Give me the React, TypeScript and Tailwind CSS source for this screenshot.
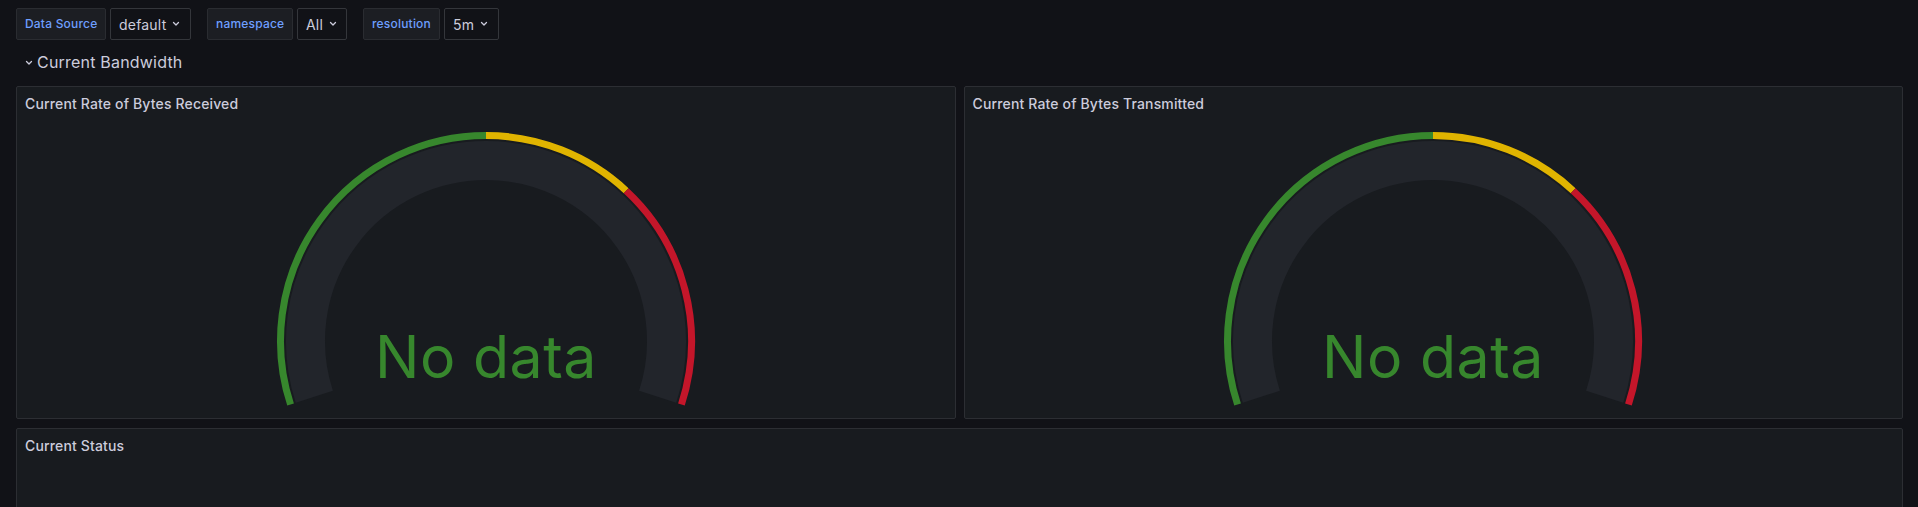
import React from "react";

function Chevron({ className = "" }: { className?: string }) {
  return (
    <svg className={className} width="8" height="6" viewBox="0 0 8 6" fill="none">
      <path d="M1.5 1.5 L4 4 L6.5 1.5" stroke="currentColor" strokeWidth="1.3" strokeLinecap="round" strokeLinejoin="round" />
    </svg>
  );
}

function VarGroup({ label, value, labelWidth, valueWidth }: { label: string; value: string; labelWidth: string; valueWidth: string }) {
  return (
    <div className="flex items-center gap-1">
      <div className={`h-8 flex items-center pl-2 bg-[#1c1e23] border border-[#2a2c31] rounded-[2px] text-[12px] font-medium tracking-[0.2px] text-[#6e9fff] ${labelWidth}`}>
        {label}
      </div>
      <div className={`h-8 flex items-center pl-2 bg-[#111217] border border-[#34363b] rounded-[2px] text-[14px] tracking-[0.2px] text-[#ccccdc] ${valueWidth}`}>
        <span>{value}</span>
        <Chevron className="ml-[6px] text-[#ccccdc]" />
      </div>
    </div>
  );
}

function Gauge() {
  return (
    <svg width="440" height="290" viewBox="0 0 440 290" className="block mx-auto mt-[3px]">
      <path d="M 48.33 274.78 A 180.5 180.5 0 1 1 391.67 274.78" stroke="#22252b" strokeWidth="39" fill="none" />
      <path d="M 24.56 282.5 A 205.5 205.5 0 0 1 220 13.5" stroke="#37872D" strokeWidth="7" fill="none" />
      <path d="M 220 13.5 A 205.5 205.5 0 0 1 360.15 68.71" stroke="#E0B400" strokeWidth="7" fill="none" />
      <path d="M 360.15 68.71 A 205.5 205.5 0 0 1 415.44 282.5" stroke="#C4162A" strokeWidth="7" fill="none" />
      <text x="220" y="256" textAnchor="middle" fontSize="59" letterSpacing="0.5" fill="#37872D" fontFamily="Inter, 'Noto Sans', sans-serif">
        No data
      </text>
    </svg>
  );
}

function Panel({ title, children, className = "" }: { title: string; children?: React.ReactNode; className?: string }) {
  return (
    <div className={`bg-[#181b1f] border border-[#2c2e33] rounded-[2px] flex flex-col overflow-hidden ${className}`}>
      <div className="h-8 flex items-center px-2 text-[14px] font-medium tracking-[0.15px] text-[#ccccdc] shrink-0">{title}</div>
      <div className="flex-1 relative">{children}</div>
    </div>
  );
}

export default function App() {
  return (
    <div className="w-[1918px] h-[507px] bg-[#111217] overflow-hidden" style={{ fontFamily: "Inter, 'Noto Sans', sans-serif" }}>
      <div className="flex items-center pl-4 pt-2 gap-4">
        <VarGroup label="Data Source" value="default" labelWidth="w-[90px]" valueWidth="w-[81px]" />
        <VarGroup label="namespace" value="All" labelWidth="w-[86px]" valueWidth="w-[50px]" />
        <VarGroup label="resolution" value="5m" labelWidth="w-[77px]" valueWidth="w-[55px]" />
      </div>
      <div className="h-[46px] flex items-center pl-[25px] pb-[2px] text-[#ccccdc]">
        <Chevron className="mr-[4px] mt-[2px]" />
        <span className="text-[16px] tracking-[0.2px]">Current Bandwidth</span>
      </div>
      <div className="grid grid-cols-2 gap-x-2 gap-y-[9px] pl-4 pr-[15px]">
        <Panel title="Current Rate of Bytes Received" className="h-[333px]">
          <Gauge />
        </Panel>
        <Panel title="Current Rate of Bytes Transmitted" className="h-[333px]">
          <Gauge />
        </Panel>
        <Panel title="Current Status" className="col-span-2 h-[300px]" />
      </div>
    </div>
  );
}
